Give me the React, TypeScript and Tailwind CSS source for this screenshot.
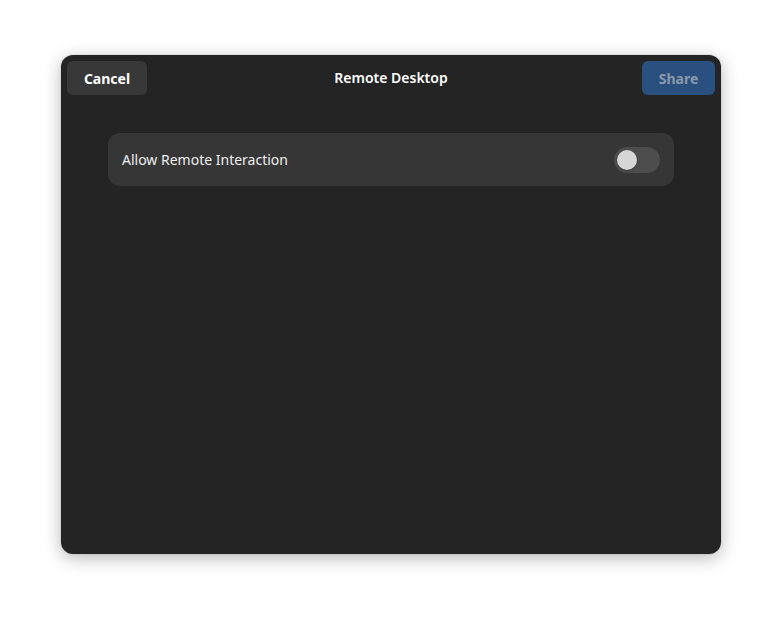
import React, { useState } from 'react';

const font = { fontFamily: '"Noto Sans", "Open Sans", sans-serif' };

export default function App() {
  const [on, setOn] = useState(false);

  return (
    <div className="w-[782px] h-[622px] bg-white flex items-start justify-center pt-[55px]" style={font}>
      <div className="w-[660px] h-[499px] rounded-[12px] bg-[#242424] shadow-[0_4px_18px_rgba(0,0,0,0.28),0_0_0_1px_rgba(0,0,0,0.05)] flex flex-col">
        <header className="h-[46px] px-[6px] pt-[6px] grid grid-cols-[1fr_auto_1fr] items-start">
          <div className="flex justify-start">
            <button className="w-[80px] h-[34px] rounded-[6px] bg-[#383838] text-white text-[14px] font-bold leading-[33px]">
              Cancel
            </button>
          </div>
          <h1 className="text-white text-[14px] font-semibold leading-[33px]">Remote Desktop</h1>
          <div className="flex justify-end">
            <button disabled className="w-[73px] h-[34px] rounded-[6px] bg-[#2a5080] text-[#8a99ab] text-[14px] font-bold leading-[33px]">
              Share
            </button>
          </div>
        </header>

        <div className="px-[47px] pt-[32px]">
          <div className="h-[53px] rounded-[12px] bg-[#363636] pl-[14px] pr-[14px] flex items-center justify-between">
            <span className="text-[#eeeeee] text-[14px]">Allow Remote Interaction</span>
            <button
              onClick={() => setOn(!on)}
              className={`w-[46px] h-[26px] rounded-full p-[3px] flex items-center ${on ? 'bg-[#3584e4] justify-end' : 'bg-[#4d4d4d] justify-start'}`}
            >
              <span className="w-[20px] h-[20px] rounded-full bg-[#d6d6d6] shadow-[0_1px_2px_rgba(0,0,0,0.3)]" />
            </button>
          </div>
        </div>
      </div>
    </div>
  );
}
